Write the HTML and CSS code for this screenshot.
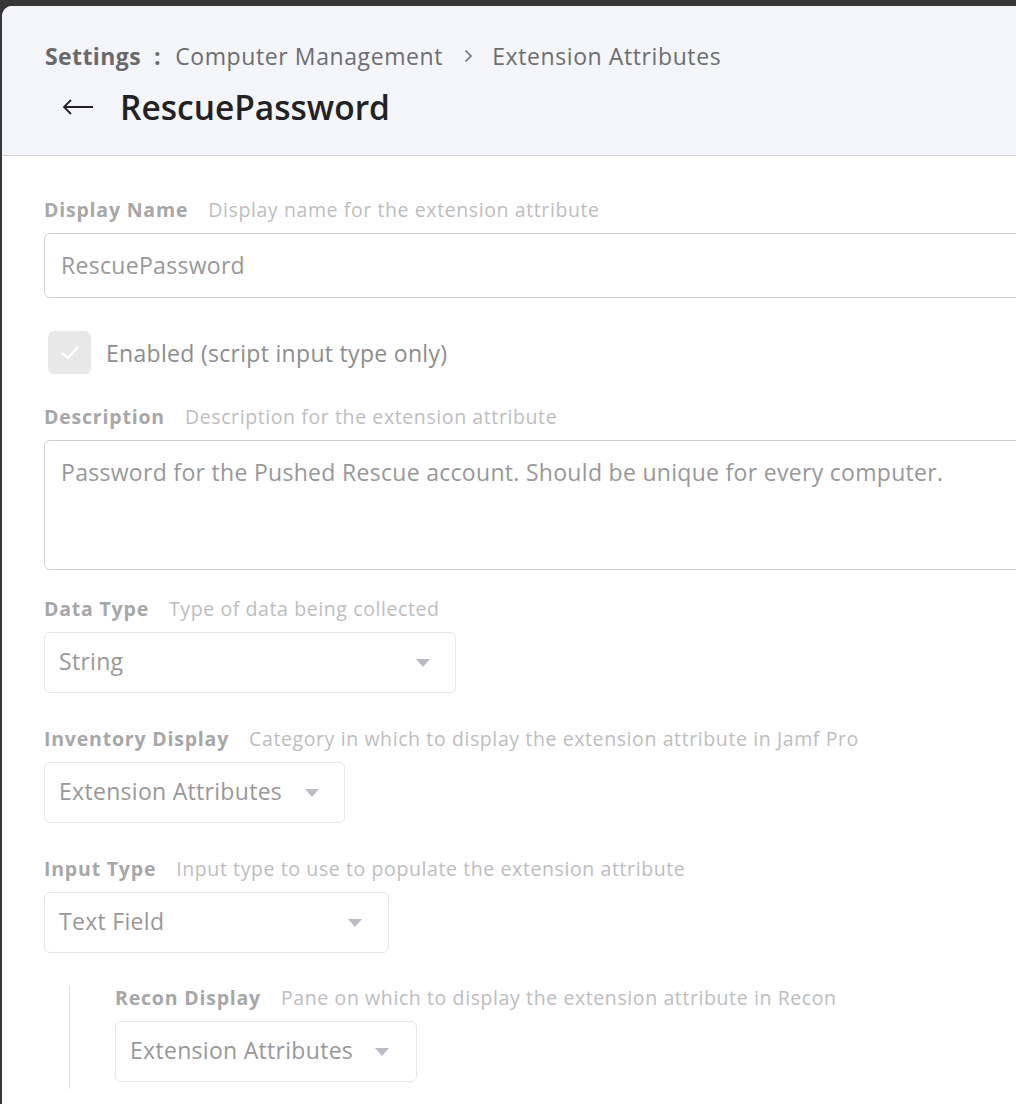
FILE: index.html
```html
<!DOCTYPE html>
<html>
<head>
<meta charset="utf-8">
<link rel="stylesheet" href="styles.css">
</head>
<body>
<div class="panel">
  <header class="header">
    <nav class="crumbs">
      <span class="crumb-root">Settings</span>
      <span class="crumb-colon">:</span>
      <span class="crumb">Computer Management</span>
      <svg class="crumb-sep" width="10" height="14" viewBox="0 0 10 14"><path d="M2.5 1.5l5.5 5.5-5.5 5.5" fill="none" stroke="#6c6d72" stroke-width="1.6"/></svg>
      <span class="crumb">Extension Attributes</span>
    </nav>
    <div class="title-row">
      <svg class="back" width="32" height="16" viewBox="0 0 32 16"><path d="M31 8H2M9 1L2 8l7 7" fill="none" stroke="#222" stroke-width="1.8"/></svg>
      <h1 class="title">RescuePassword</h1>
    </div>
  </header>
  <main class="form">
    <div class="field">
      <div class="label"><b>Display Name</b><span>Display name for the extension attribute</span></div>
      <div class="box input">RescuePassword</div>
    </div>
    <div class="check-row">
      <span class="checkbox"><svg width="20" height="16" viewBox="0 0 20 16"><path d="M2 8l6 5 10-11" fill="none" stroke="#fff" stroke-width="2"/></svg></span>
      <span class="check-label">Enabled (script input type only)</span>
    </div>
    <div class="field field-desc">
      <div class="label"><b>Description</b><span>Description for the extension attribute</span></div>
      <div class="box textarea">Password for the Pushed Rescue account. Should be unique for every computer.</div>
    </div>
    <div class="field">
      <div class="label"><b>Data Type</b><span>Type of data being collected</span></div>
      <div class="box select sel-data"><span>String</span><i class="caret"></i></div>
    </div>
    <div class="field">
      <div class="label"><b>Inventory Display</b><span>Category in which to display the extension attribute in Jamf Pro</span></div>
      <div class="box select sel-inv"><span>Extension Attributes</span><i class="caret"></i></div>
    </div>
    <div class="field field-input">
      <div class="label"><b>Input Type</b><span>Input type to use to populate the extension attribute</span></div>
      <div class="box select sel-input"><span>Text Field</span><i class="caret"></i></div>
    </div>
    <div class="nested">
      <div class="field">
        <div class="label"><b>Recon Display</b><span>Pane on which to display the extension attribute in Recon</span></div>
        <div class="box select sel-recon"><span>Extension Attributes</span><i class="caret"></i></div>
      </div>
    </div>
  </main>
</div>
</body>
</html>
```
FILE: styles.css
```css
* { box-sizing: border-box; }
html, body { margin: 0; padding: 0; }
body {
  background: #363636;
  font-family: "Open Sans", "Liberation Sans", sans-serif;
  width: 1016px;
  height: 1104px;
  overflow: hidden;
}
.panel {
  margin: 6px 0 0 2px;
  height: 1098px;
  background: #fff;
  border-top-left-radius: 10px;
  overflow: hidden;
}
.header {
  height: 150px;
  background: #f4f5f8;
  border-bottom: 1px solid #cfd0d4;
  padding: 38px 0 0 43px;
}
.crumbs {
  display: flex;
  align-items: center;
  font-size: 23px;
  letter-spacing: 0.6px;
  line-height: 24px;
  color: #6c6d72;
}
.crumb-root { font-weight: 700; color: #69696d; letter-spacing: 0.4px; }
.crumb-colon { font-weight: 700; margin: 0 14px 0 13px; }
.crumb-sep { margin: 0 19px 0 20px; }
.title-row {
  display: flex;
  align-items: center;
  margin-top: 19px;
  padding-left: 17px;
}
.back { margin-right: 26px; }
.title {
  margin: 0;
  font-size: 33.5px;
  line-height: 40px;
  font-weight: 600;
  color: #222225;
}
.form {
  padding: 42px 0 0 42px;
}
.label {
  display: flex;
  align-items: center;
  font-size: 19.5px;
  line-height: 24px;
  margin-bottom: 11px;
  white-space: nowrap;
}
.label b { font-weight: 700; color: #a7a7a9; margin-right: 20px; letter-spacing: 0.8px; }
.label span { color: #bdbdbf; letter-spacing: 0.6px; }
.field { margin-bottom: 34px; }
.field-input { margin-bottom: 33px; }
.box {
  border: 1px solid #cfcfd1;
  border-radius: 6px;
  font-size: 23px;
  letter-spacing: 0.3px;
  color: #98989a;
}
.input {
  width: 1000px;
  height: 65px;
  padding: 0 0 2px 16px;
  display: flex;
  align-items: center;
}
.check-row {
  display: flex;
  align-items: center;
  margin: -1px 0 31px 4px;
}
.checkbox {
  width: 43px;
  height: 43px;
  background: #e8e8e9;
  border-radius: 6px;
  display: flex;
  align-items: center;
  justify-content: center;
  margin-right: 15px;
}
.check-label { font-size: 23px; letter-spacing: 0.3px; color: #8d8d8f; }
.field-desc { margin-bottom: 27px; }
.textarea {
  width: 1000px;
  height: 130px;
  padding: 16px 0 0 16px;
  line-height: 30px;
}
.select {
  height: 61px;
  border-color: #e6e6e8;
  display: flex;
  align-items: center;
  padding-left: 14px;
  justify-content: space-between;
}
.select span { margin-bottom: 3px; }
.caret {
  width: 0; height: 0;
  border-left: 7px solid transparent;
  border-right: 7px solid transparent;
  border-top: 8px solid #b9bcc5;
}
.sel-data { width: 412px; padding-right: 25px; }
.sel-inv { width: 301px; padding-right: 25px; }
.sel-input { width: 345px; padding-right: 26px; }
.sel-recon { width: 302px; padding-right: 27px; }
.nested {
  margin-left: 25px;
  border-left: 1px solid #e3e3e5;
  padding: 0 0 7px 45px;
}
.nested .field { margin-bottom: 0; }
```
